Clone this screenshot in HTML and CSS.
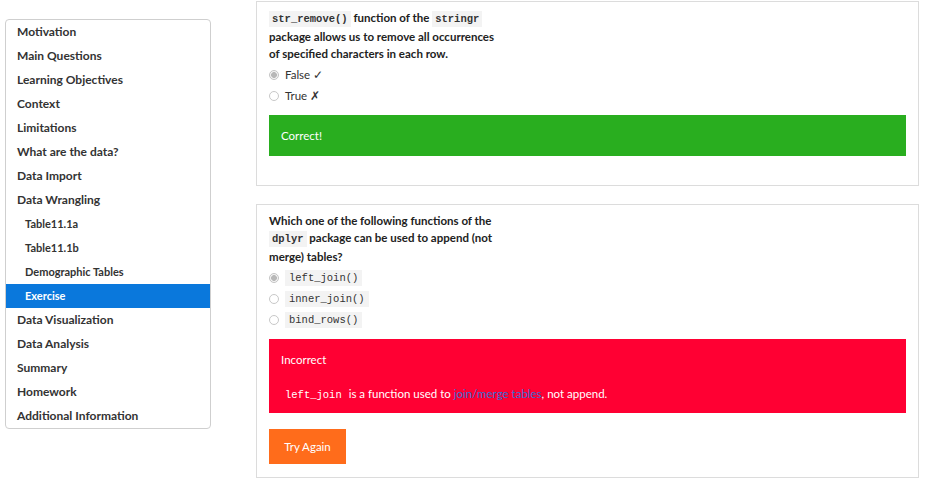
FILE: index.html
```html
<!DOCTYPE html>
<html>
<head>
<meta charset="utf-8">
<link rel="stylesheet" href="styles.css">
</head>
<body>
<div class="page">
  <nav class="toc">
    <a class="item">Motivation</a>
    <a class="item">Main Questions</a>
    <a class="item">Learning Objectives</a>
    <a class="item">Context</a>
    <a class="item">Limitations</a>
    <a class="item">What are the data?</a>
    <a class="item">Data Import</a>
    <a class="item">Data Wrangling</a>
    <a class="item sub">Table11.1a</a>
    <a class="item sub">Table11.1b</a>
    <a class="item sub">Demographic Tables</a>
    <a class="item sub active">Exercise</a>
    <a class="item">Data Visualization</a>
    <a class="item">Data Analysis</a>
    <a class="item">Summary</a>
    <a class="item">Homework</a>
    <a class="item">Additional Information</a>
  </nav>
  <main class="main">
    <section class="panel panel-first">
      <div class="question"><code class="qcode">str_remove()</code> function of the <code class="qcode">stringr</code><br>package allows us to remove all occurrences<br>of specified characters in each row.</div>
      <div class="options">
        <label class="opt"><span class="radio checked"></span><span>False ✓</span></label>
        <label class="opt"><span class="radio"></span><span>True ✗</span></label>
      </div>
      <div class="alert success">Correct!</div>
    </section>
    <section class="panel">
      <div class="question">Which one of the following functions of the<br><code class="qcode">dplyr</code> package can be used to append (not<br>merge) tables?</div>
      <div class="options">
        <label class="opt"><span class="radio checked"></span><code class="ocode">left_join()</code></label>
        <label class="opt"><span class="radio"></span><code class="ocode">inner_join()</code></label>
        <label class="opt"><span class="radio"></span><code class="ocode">bind_rows()</code></label>
      </div>
      <div class="alert danger">
        <div class="alert-title">Incorrect</div>
        <p class="explain"><code class="ecode">left_join</code> is a function used to <a class="link">join/merge tables</a>, not append.</p>
      </div>
      <button class="btn">Try Again</button>
    </section>
  </main>
</div>
</body>
</html>
```
FILE: styles.css
```css
html, body {
  margin: 0;
  padding: 0;
  background: #fff;
}
body {
  font-family: "Lato", "Noto Sans", sans-serif;
  color: #333;
  width: 926px;
  height: 480px;
  overflow: hidden;
}
.page {
  display: flex;
  align-items: flex-start;
}
.toc {
  margin: 19px 0 0 5px;
  width: 204px;
  border: 1px solid #cfcfcf;
  border-radius: 4px;
  display: flex;
  flex-direction: column;
  overflow: hidden;
}
.item {
  height: 24px;
  line-height: 24px;
  padding-left: 11px;
  font-size: 12px;
  font-weight: 700;
  color: #333;
}
.item.sub {
  padding-left: 19px;
  font-size: 11px;
}
.item.active {
  background: #0a78dc;
  color: #fff;
}
.main {
  margin: 1px 0 0 45px;
  width: 663px;
  display: flex;
  flex-direction: column;
  gap: 18px;
}
.panel {
  border: 1px solid #dcdcdc;
  padding: 7px 12px 13px;
}
.panel-first {
  padding-bottom: 29px;
}
.question {
  font-size: 11.5px;
  font-weight: 700;
  line-height: 17px;
  color: #222;
}
.qcode {
  font-family: "Liberation Mono", "DejaVu Sans Mono", monospace;
  font-size: 10.5px;
  font-weight: 700;
  background: #f3f3f3;
  padding: 2px 3px;
  color: #333;
}
.options {
  display: flex;
  flex-direction: column;
  margin-top: 2px;
}
.opt {
  height: 21px;
  display: flex;
  align-items: center;
  gap: 6px;
  font-size: 11.5px;
  color: #333;
}
.radio {
  width: 8px;
  height: 8px;
  border: 1px solid #c8c8c8;
  border-radius: 50%;
  background: #fff;
  flex: none;
}
.radio.checked {
  border-color: #c4c4c4;
  background: radial-gradient(circle, #b8b8b8 0 2.6px, #f4f4f4 3.2px);
}
.ocode {
  font-family: "Liberation Mono", "DejaVu Sans Mono", monospace;
  font-size: 10.5px;
  background: #f3f3f3;
  padding: 2px 4px;
  color: #333;
}
.alert {
  margin-top: 9px;
  color: #fff;
  font-size: 11.5px;
  padding: 0 12px;
}
.success {
  background: #29ae1f;
  height: 41px;
  line-height: 41px;
}
.danger {
  background: #ff0033;
  padding-top: 13px;
  padding-bottom: 10px;
}
.alert-title {
  line-height: 15px;
}
.explain {
  margin: 19px 0 0;
  padding-left: 2px;
  line-height: 15px;
}
.ecode {
  font-family: "Liberation Mono", "DejaVu Sans Mono", monospace;
  font-size: 10.5px;
  padding: 0 4px 0 2px;
}
.link {
  color: #3a6bd1;
}
.btn {
  display: block;
  margin-top: 16px;
  width: 77px;
  height: 35px;
  border: none;
  background: #ff6c1b;
  color: #fff;
  font-family: "Lato", "Noto Sans", sans-serif;
  font-size: 11.5px;
  padding: 0;
}
```
